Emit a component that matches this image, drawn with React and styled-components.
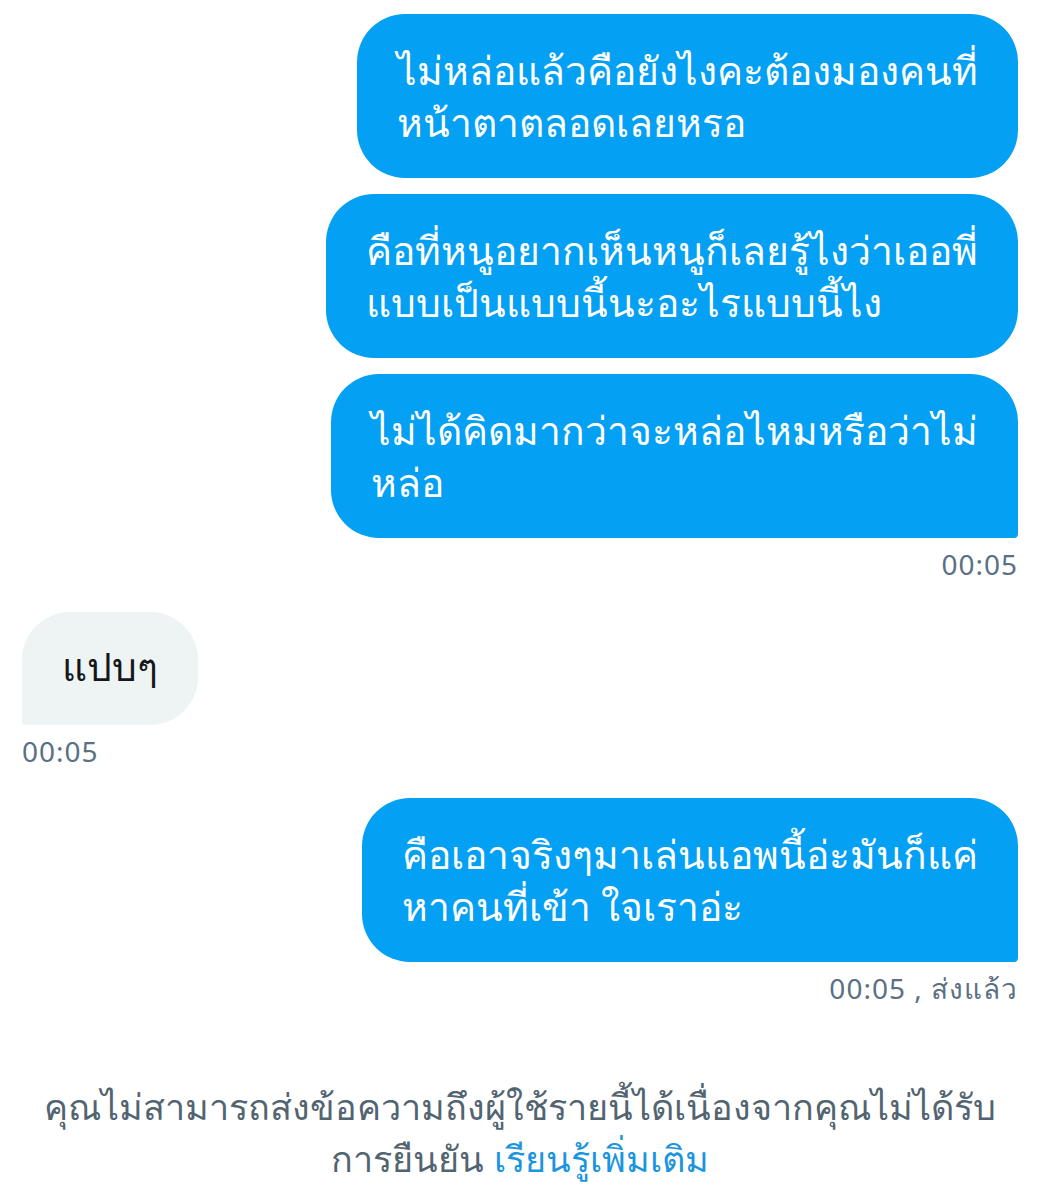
import React from "react";
import styled, { createGlobalStyle } from "styled-components";

const GlobalStyle = createGlobalStyle`
  body {
    margin: 0;
    background: #ffffff;
    font-family: "Noto Sans", "DejaVu Sans", sans-serif;
  }
`;

const messages = [
  { id: 1, mine: true, lines: ["ไม่หล่อแล้วคือยังไงคะต้องมองคนที่", "หน้าตาตลอดเลยหรอ"] },
  { id: 2, mine: true, lines: ["คือที่หนูอยากเห็นหนูก็เลยรู้ไงว่าเออพี่", "แบบเป็นแบบนี้นะอะไรแบบนี้ไง"] },
  { id: 3, mine: true, last: true, lines: ["ไม่ได้คิดมากว่าจะหล่อไหมหรือว่าไม่", "หล่อ"], time: "00:05" },
  { id: 4, mine: false, last: true, lines: ["แปบๆ"], time: "00:05" },
  { id: 5, mine: true, last: true, lines: ["คือเอาจริงๆมาเล่นแอพนี้อ่ะมันก็แค่", "หาคนที่เข้า ใจเราอ่ะ"], time: "00:05 , ส่งแล้ว" },
];

const App = () => {
  return (
    <>
      <GlobalStyle />
      <Page>
        <Thread>
          {messages.map((m) => (
            <Group key={m.id} $mine={m.mine} $gap={m.id === 4 ? 17 : m.id === 5 ? 16 : 0}>
              <Bubble $mine={m.mine} $last={m.last} $short={m.lines.length === 1}>
                {m.lines.map((l, i) => (
                  <Line key={i}>{l}</Line>
                ))}
              </Bubble>
              {m.time && <Time>{m.time}</Time>}
            </Group>
          ))}
        </Thread>
        <Notice>
          คุณไม่สามารถส่งข้อความถึงผู้ใช้รายนี้ได้เนื่องจากคุณไม่ได้รับ
          <br />
          การยืนยัน <Link href="#">เรียนรู้เพิ่มเติม</Link>
        </Notice>
      </Page>
    </>
  );
};

const Page = styled.div`
  width: 1040px;
  height: 1200px;
  box-sizing: border-box;
  padding: 14px 22px 0;
  display: flex;
  flex-direction: column;
  overflow: hidden;
`;

const Thread = styled.div`
  display: flex;
  flex-direction: column;
  gap: 16px;
`;

const Group = styled.div`
  display: flex;
  flex-direction: column;
  align-items: ${(p) => (p.$mine ? "flex-end" : "flex-start")};
  margin-top: ${(p) => p.$gap}px;
`;

const Bubble = styled.div`
  box-sizing: border-box;
  background: ${(p) => (p.$mine ? "#03a0f4" : "#eef3f3")};
  color: ${(p) => (p.$mine ? "#ffffff" : "#14171a")};
  border-radius: 48px;
  ${(p) => p.$last && (p.$mine ? "border-bottom-right-radius: 4px;" : "border-bottom-left-radius: 4px;")}
  padding: ${(p) => (p.$short ? "28px 40px 28px 40px" : "30px 40px 28px 40px")};
  height: ${(p) => (p.$short ? "113px" : "164px")};
  font-size: 39px;
  line-height: 52px;
`;

const Line = styled.div`
  white-space: nowrap;
`;

const Time = styled.div`
  margin-top: 11px;
  color: #5b7083;
  font-size: 28px;
  letter-spacing: 1px;
  line-height: 30px;
`;

const Notice = styled.div`
  margin-top: 78px;
  text-align: center;
  color: #536471;
  font-size: 36px;
  line-height: 52px;
`;

const Link = styled.a`
  color: #1b95e0;
  text-decoration: none;
`;

export default App;
